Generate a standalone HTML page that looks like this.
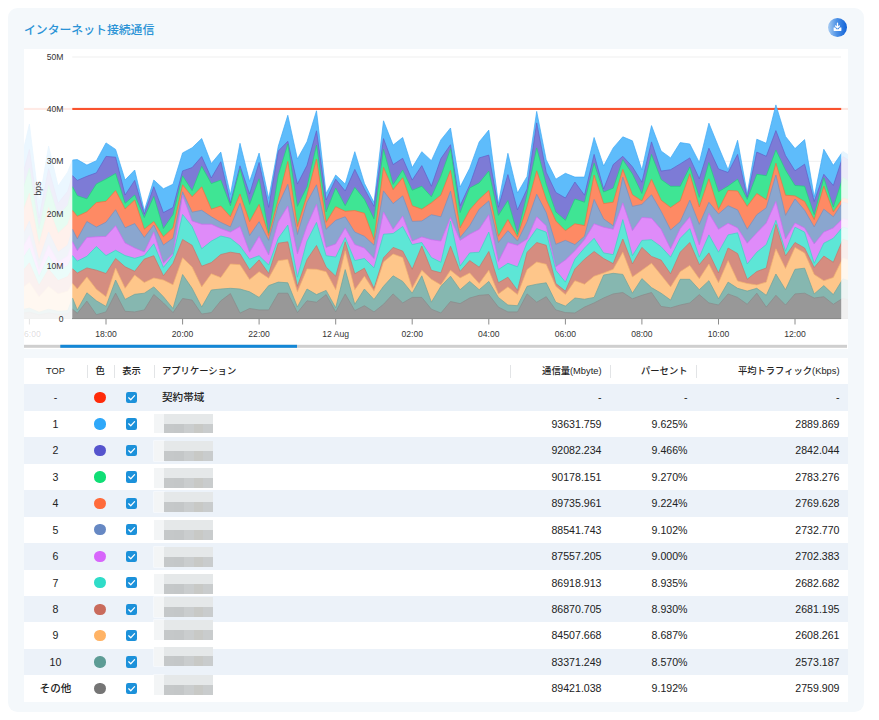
<!DOCTYPE html>
<html lang="ja"><head><meta charset="utf-8"><title>インターネット接続通信</title>
<style>
html,body{margin:0;padding:0;background:#fff}
body{width:879px;height:720px;position:relative;overflow:hidden;font-family:"Liberation Sans","Noto Sans CJK JP",sans-serif;color:#222}
.card{position:absolute;left:8px;top:8px;width:856px;height:704px;background:#f4f8fb;border-radius:9.5px}
.title{position:absolute;left:24px;top:21px;font-size:11.85px;line-height:18px;font-weight:500;color:#2a93d6;letter-spacing:0}
.dl{position:absolute;left:828.2px;top:18.2px;width:19px;height:19px;border-radius:50%;background:linear-gradient(90deg,#a9cdf3 0%,#4f93e6 45%,#0f62d8 100%);box-shadow:0 0 2px rgba(255,255,255,.9)}
.dl svg{position:absolute;left:4px;top:4px}
svg.chart{position:absolute;left:0;top:0}
svg.chart text{font-family:"Liberation Sans",sans-serif;font-size:8.6px;fill:#333}
.tbl{position:absolute;left:24px;top:358px;width:824px;background:#fff;font-size:10.6px;font-weight:500}
.tr,.th{position:relative;height:26.45px;line-height:26.45px;white-space:nowrap}
.tr.alt{background:#ecf2f9}
.tr span,.th span{position:absolute;top:0;height:100%}
.c1{left:0;width:63px;text-align:center}
.c2{left:63px;width:26.5px;text-align:center}
.c3{left:87.5px;width:40px;text-align:center}
.c4{left:138px}
.c5{left:400px;width:177.5px;text-align:right}
.c6{left:586px;width:77.5px;text-align:right}
.c7{left:672px;width:143.5px;text-align:right}
.th{font-size:9.3px;color:#222;font-weight:500}
.th .sep{top:6.5px;height:13px;width:1px;background:#e2e4e6}
.dot{position:absolute;left:7.4px;top:7.6px;width:11.2px;height:11.2px;border-radius:50%}
.cb{position:absolute;left:14.3px;top:7.6px;width:11.2px;height:11.2px;border-radius:2.2px;background:#1c91da}
.cb svg{position:absolute;left:0;top:0}
.nm{left:0}
.rd{position:absolute;left:-7.6px;top:0;width:58.7px;height:19.6px}
.tr .rd i{position:absolute;left:0;top:0;width:9.4px;height:19.6px;background:#f3f5f6;box-shadow:0 0 0 .6px rgba(255,255,255,.8)}
.tr .rd u{position:absolute;left:9.4px;top:0;width:49.3px;height:9.9px;background:#e5e8e9}
.tr .rd b{position:absolute;left:9.4px;top:9.9px;width:49.3px;height:9.7px;background:linear-gradient(90deg,#c5c8c9 0 20%,#c4c7c8 20% 40%,#cacdce 40% 61%,#c8c9c6 61% 80%,#c9cccd 80%)}
</style></head><body>
<div class="card"></div>
<div class="title">インターネット接続通信</div>
<div class="dl"><svg width="11" height="11" viewBox="0 0 11 11"><path d="M5.5 1.2v4.3M3.6 4 5.5 5.9 7.4 4" fill="none" stroke="#fff" stroke-width="1.3" stroke-linecap="round" stroke-linejoin="round"/><path d="M1.6 5.6v2.6q0 .9.9.9h6q.9 0 .9-.9V5.6H7.7L6.6 7.3H4.4L3.3 5.6z" fill="#fff"/></svg></div>
<svg class="chart" width="879" height="720" viewBox="0 0 879 720">
<defs><clipPath id="cp"><rect x="24" y="49" width="824" height="270"/></clipPath></defs>
<rect x="24" y="49" width="824" height="300" fill="#fff"/>
<line x1="72" x2="841" y1="57" y2="57" stroke="#efefef" stroke-width="1"/><line x1="72" x2="841" y1="161.3" y2="161.3" stroke="#efefef" stroke-width="1"/><line x1="72" x2="841" y1="213.8" y2="213.8" stroke="#efefef" stroke-width="1"/><line x1="72" x2="841" y1="266.3" y2="266.3" stroke="#efefef" stroke-width="1"/>
<g clip-path="url(#cp)">
<rect x="24" y="107.9" width="824" height="2.1" fill="#f9522d"/>
<polygon fill="#5ebcfb" stroke="#3fa9f5" stroke-width=".7" points="19.9,165 29.4,124 39,203 48.6,146 58.1,186 67.7,172 72.5,160 77.3,159.6 86.9,165.1 96.4,160.7 106,142.9 115.6,149.4 125.1,180 134.7,170 144.3,210.7 153.8,180 163.4,188.8 173,184.2 182.6,152.9 192.1,147.8 201.7,138.5 211.3,163.5 220.8,152.1 230.4,194.7 240,143.3 249.6,181.5 259.1,153.1 268.7,198.5 278.3,146.1 287.8,115.3 297.4,159 307,141.7 316.5,110.8 326.1,193.5 335.7,175 345.2,184 354.8,151.7 364.4,183.3 374,202.5 383.5,120.8 393.1,145.1 402.7,137.5 412.2,167.6 421.8,151.7 431.4,160.7 440.9,139.9 450.5,128 460.1,187 469.7,168.3 479.2,141.9 488.8,130.1 498.4,203.5 507.9,153.3 517.5,193 527.1,176.4 536.7,111.4 546.2,159.7 555.8,179.2 565.4,173.3 574.9,177.1 584.5,177.1 594.1,137.5 603.6,166 613.2,147.9 622.8,136.8 632.4,140.8 641.9,170 651.5,125.6 661.1,151 670.6,157.9 680.2,142.6 689.8,144 699.3,162.5 708.9,123.2 718.5,146.8 728.1,169.7 737.6,140.3 747.2,193.8 756.8,139.2 766.3,143.3 775.9,104.9 785.5,136.4 795,148.6 804.6,139.6 814.2,197 823.8,149.3 833.3,165.3 842.9,151.4 852.5,157.4 852.5,318.5 19.9,318.5"/>
<polygon fill="#7d7bd6" stroke="#6260c8" stroke-width=".7" points="19.9,185.1 29.4,149.5 39,218.1 48.6,168.6 58.1,203.3 67.7,191.2 72.5,175.6 77.3,180.4 86.9,176.3 96.4,172.8 106,156.4 115.6,157.2 125.1,195 134.7,180.4 144.3,214.1 153.8,186.7 163.4,212.6 173,207.5 182.6,170.9 192.1,167.6 201.7,156.5 211.3,178 220.8,161.7 230.4,203 240,165.8 249.6,194 259.1,162.5 268.7,207.4 278.3,151 287.8,141.3 297.4,184.1 307,165.3 316.5,130.8 326.1,200 335.7,179.2 345.2,191 354.8,169.4 364.4,189 374,206.4 383.5,138.6 393.1,164.6 402.7,158.3 412.2,180.1 421.8,165.6 431.4,186.3 440.9,158.6 450.5,144.7 460.1,205.8 469.7,185 479.2,157.9 488.8,155.1 498.4,207.3 507.9,174.6 517.5,209.9 527.1,188.9 536.7,122.9 546.2,172.2 555.8,192.4 565.4,198 574.9,182 584.5,195.2 594.1,154.4 603.6,189 613.2,164.6 622.8,156.3 632.4,166.7 641.9,182.2 651.5,141.9 661.1,171.1 670.6,169.7 680.2,163.9 689.8,157.9 699.3,178.8 708.9,148.2 718.5,169 728.1,172.5 737.6,154.4 747.2,197.3 756.8,152.1 766.3,156.3 775.9,130.6 785.5,155.6 795,170.8 804.6,164.2 814.2,201.5 823.8,174.3 833.3,185.5 842.9,156.6 852.5,162.6 852.5,318.5 19.9,318.5"/>
<polygon fill="#3fe594" stroke="#22cf7c" stroke-width=".7" points="19.9,199.9 29.4,168.2 39,229.2 48.6,185.2 58.1,216.1 67.7,205.3 72.5,186.7 77.3,195.7 86.9,198.9 96.4,183.9 106,179 115.6,173.5 125.1,203.3 134.7,195 144.3,217.6 153.8,196.4 163.4,228.5 173,214.5 182.6,175.8 192.1,190.6 201.7,166.3 211.3,183.6 220.8,180.1 230.4,205.8 240,169 249.6,204.4 259.1,178.8 268.7,233.5 278.3,175.3 287.8,144 297.4,206.4 307,186.8 316.5,145.1 326.1,212 335.7,188 345.2,205.7 354.8,187.4 364.4,199.3 374,218.9 383.5,149.3 393.1,184.5 402.7,170.1 412.2,190.3 421.8,186.2 431.4,196.8 440.9,176 450.5,148.9 460.1,212.6 469.7,188 479.2,182.9 488.8,171.1 498.4,215.4 507.9,200.5 517.5,234.2 527.1,193.9 536.7,147.9 546.2,184.1 555.8,211.9 565.4,220.3 574.9,199 584.5,202.2 594.1,163.2 603.6,192 613.2,188.2 622.8,159.7 632.4,173.9 641.9,193.6 651.5,154.4 661.1,179.4 670.6,186.3 680.2,186.3 689.8,166.9 699.3,197.4 708.9,162.5 718.5,191.8 728.1,186.1 737.6,179.2 747.2,199.4 756.8,174.3 766.3,175.7 775.9,150 785.5,170.1 795,185.5 804.6,186.2 814.2,214.7 823.8,177.8 833.3,207.1 842.9,177.4 852.5,183.4 852.5,318.5 19.9,318.5"/>
<polygon fill="#fe8a64" stroke="#f0703f" stroke-width=".7" points="19.9,219.8 29.4,193.4 39,244.2 48.6,207.6 58.1,233.3 67.7,224.3 72.5,210.4 77.3,216.3 86.9,211.8 96.4,202.6 106,201.3 115.6,190.6 125.1,209 134.7,200 144.3,229.2 153.8,221.5 163.4,236.8 173,227.8 182.6,184.8 192.1,196.8 201.7,186.8 211.3,209.2 220.8,206 230.4,216.8 240,194 249.6,221.7 259.1,204.4 268.7,235.6 278.3,199.2 287.8,161.4 297.4,226.5 307,195.3 316.5,159 326.1,222.4 335.7,206.7 345.2,211.3 354.8,210.6 364.4,213.3 374,239.7 383.5,167.4 393.1,189.7 402.7,177.8 412.2,205.8 421.8,209.2 431.4,202.8 440.9,195.1 450.5,170.4 460.1,227.9 469.7,210 479.2,199.2 488.8,190.5 498.4,236.3 507.9,219.6 517.5,236.9 527.1,206.4 536.7,170.8 546.2,199.6 555.8,221 565.4,230.7 574.9,223.8 584.5,225.6 594.1,175 603.6,203.6 613.2,202.2 622.8,169.4 632.4,194.8 641.9,200.9 651.5,179.4 661.1,200.2 670.6,207.5 680.2,200.9 689.8,173.9 699.3,207 708.9,178.8 718.5,209.6 728.1,190.5 737.6,191 747.2,206.4 756.8,193.5 766.3,199.7 775.9,163.2 785.5,195.2 795,195.9 804.6,201.5 814.2,219.6 823.8,186.2 833.3,211.9 842.9,198 852.5,201 852.5,318.5 19.9,318.5"/>
<polygon fill="#8aa6cf" stroke="#7391c1" stroke-width=".7" points="19.9,241.6 29.4,221.1 39,260.6 48.6,232.1 58.1,252.1 67.7,245.1 72.5,229.2 77.3,238.9 86.9,221.5 96.4,227.1 106,222.2 115.6,209.7 125.1,227.8 134.7,223.6 144.3,237.5 153.8,225 163.4,245.1 173,238.2 182.6,191.8 192.1,212.2 201.7,210.3 211.3,216.8 220.8,222.4 230.4,226.9 240,203.3 249.6,235.6 259.1,221.7 268.7,240.4 278.3,205 287.8,184.3 297.4,234.5 307,202.2 316.5,184.8 326.1,229.3 335.7,220.3 345.2,216.8 354.8,232.1 364.4,236.3 374,245.2 383.5,190.9 393.1,203.6 402.7,195.9 412.2,221.4 421.8,221 431.4,214.7 440.9,216.8 450.5,191.2 460.1,237.6 469.7,225.8 479.2,209.2 488.8,200.9 498.4,242.5 507.9,230.7 517.5,241.1 527.1,221.7 536.7,194.2 546.2,212.6 555.8,244.3 565.4,240.4 574.9,244.6 584.5,236.3 594.1,199.4 603.6,218.9 613.2,225.8 622.8,177.1 632.4,206.4 641.9,204.4 651.5,194.8 661.1,211.3 670.6,230 680.2,221.7 689.8,200.2 699.3,224.4 708.9,202.3 718.5,214 728.1,205.7 737.6,209.9 747.2,229.3 756.8,214.7 766.3,207.8 775.9,175 785.5,215.4 795,199 804.6,210.3 814.2,226.9 823.8,209.2 833.3,216.8 842.9,202 852.5,205 852.5,318.5 19.9,318.5"/>
<polygon fill="#df8bf9" stroke="#cf6cf0" stroke-width=".7" points="19.9,253 29.4,235.5 39,269.2 48.6,244.9 58.1,262 67.7,256 72.5,241.7 77.3,250.7 86.9,237.5 96.4,236.8 106,236.4 115.6,225.7 125.1,243 134.7,247.9 144.3,252 153.8,232 163.4,263.2 173,253.5 182.6,195.3 192.1,221 201.7,224.2 211.3,224.2 220.8,228.6 230.4,232.1 240,226.5 249.6,252.2 259.1,236.3 268.7,255 278.3,221.7 287.8,206.1 297.4,254 307,225.8 316.5,204.3 326.1,247.4 335.7,243.9 345.2,227.9 354.8,244.6 364.4,248 374,258.5 383.5,212 393.1,229.3 402.7,216.1 412.2,241.1 421.8,236.9 431.4,239.7 440.9,241.1 450.5,217.5 460.1,240.4 469.7,234.2 479.2,229.3 488.8,214.7 498.4,261.5 507.9,242.5 517.5,245.3 527.1,239 536.7,216.8 546.2,225.8 555.8,266.8 565.4,259.9 574.9,250.8 584.5,239.7 594.1,223.8 603.6,227.2 613.2,229.3 622.8,202.9 632.4,230.7 641.9,217.5 651.5,218.2 661.1,229.3 670.6,248.8 680.2,228.6 689.8,216.8 699.3,245 708.9,213.3 718.5,229.3 728.1,223.3 737.6,227.9 747.2,243.2 756.8,232.8 766.3,223 775.9,201.5 785.5,239 795,223 804.6,227.9 814.2,243.9 823.8,232.1 833.3,227.9 842.9,218.4 852.5,221.4 852.5,318.5 19.9,318.5"/>
<polygon fill="#5de6d6" stroke="#3fd3c2" stroke-width=".7" points="19.9,263.1 29.4,248.2 39,276.8 48.6,256.2 58.1,270.6 67.7,265.6 72.5,255.6 77.3,261.1 86.9,256.3 96.4,246.5 106,255.6 115.6,250.3 125.1,255.6 134.7,258.3 144.3,255.6 153.8,243.8 163.4,267.4 173,255.6 182.6,214.5 192.1,226.5 201.7,248.8 211.3,241.1 220.8,236 230.4,238.3 240,246 249.6,259.2 259.1,255.7 268.7,265 278.3,238.3 287.8,225.1 297.4,277.2 307,241.1 316.5,222.4 326.1,255.7 335.7,257.1 345.2,237.6 354.8,260.6 364.4,258.5 374,267.8 383.5,234.2 393.1,233.5 402.7,226.5 412.2,244.6 421.8,242.5 431.4,257.5 440.9,262.3 450.5,221 460.1,266.1 469.7,252.9 479.2,252.2 488.8,232.1 498.4,269.6 507.9,263.3 517.5,266.8 527.1,242.5 536.7,228.6 546.2,232.1 555.8,270.3 565.4,282.1 574.9,259.2 584.5,248 594.1,238.3 603.6,252.9 613.2,254.6 622.8,219.6 632.4,255.7 641.9,240.4 651.5,239.7 661.1,246.7 670.6,257.1 680.2,238.3 689.8,228.6 699.3,257.1 708.9,234.9 718.5,252.2 728.1,234.9 737.6,232.8 747.2,264 756.8,252.2 766.3,244.6 775.9,220.3 785.5,251.2 795,227.2 804.6,232.1 814.2,263.3 823.8,243.2 833.3,238.3 842.9,227 852.5,230 852.5,318.5 19.9,318.5"/>
<polygon fill="#d58d80" stroke="#c5766a" stroke-width=".7" points="19.9,274.5 29.4,262.8 39,285.4 48.6,269.1 58.1,280.6 67.7,276.6 72.5,268.8 77.3,273 86.9,267.9 96.4,270.2 106,273.5 115.6,258.4 125.1,266.8 134.7,271.3 144.3,259.1 153.8,255.7 163.4,275.8 173,263.3 182.6,239.5 192.1,245.3 201.7,266.2 211.3,262.6 220.8,254.5 230.4,252.2 240,253.8 249.6,269.8 259.1,259.9 268.7,273.5 278.3,243.2 287.8,241.8 297.4,286.3 307,259.6 316.5,245.5 326.1,267 335.7,276.2 345.2,241.8 354.8,273.8 364.4,268.2 374,288.3 383.5,257.8 393.1,247.4 402.7,251.1 412.2,269.3 421.8,246 431.4,270.3 440.9,272.8 450.5,246.2 460.1,271.4 469.7,260.6 479.2,267.2 488.8,251.5 498.4,282.8 507.9,277.2 517.5,290.4 527.1,252.2 536.7,242.5 546.2,245.3 555.8,283.5 565.4,291.1 574.9,268.9 584.5,259.2 594.1,251.5 603.6,258.5 613.2,263.6 622.8,239 632.4,264 641.9,247.4 651.5,256.4 661.1,260.1 670.6,273.8 680.2,252.2 689.8,242.5 699.3,264.7 708.9,252.9 718.5,273 728.1,248 737.6,253.6 747.2,279.3 756.8,271.5 766.3,268 775.9,224.4 785.5,256 795,242.5 804.6,248 814.2,267.5 823.8,256.1 833.3,262.3 842.9,239.3 852.5,242.3 852.5,318.5 19.9,318.5"/>
<polygon fill="#fec68a" stroke="#f0b070" stroke-width=".7" points="19.9,290 29.4,282.4 39,297.1 48.6,286.5 58.1,293.9 67.7,291.3 72.5,283.4 77.3,289 86.9,276.9 96.4,289.3 106,296.7 115.6,268.1 125.1,288.3 134.7,275.1 144.3,282.5 153.8,278 163.4,280 173,284.8 182.6,257.8 192.1,267 201.7,286.9 211.3,273.8 220.8,277.6 230.4,264 240,264.7 249.6,279.5 259.1,271.7 268.7,278.2 278.3,260.7 287.8,259.4 297.4,291.8 307,268.9 316.5,269.3 326.1,271.7 335.7,289.7 345.2,250.8 354.8,289.7 364.4,276.2 374,291.1 383.5,262 393.1,254 402.7,257.5 412.2,288.3 421.8,270.3 431.4,279.3 440.9,284.9 450.5,270.3 460.1,277.9 469.7,273 479.2,283.5 488.8,270.3 498.4,293.9 507.9,286.9 517.5,294.6 527.1,269.6 536.7,262 546.2,264.3 555.8,286.3 565.4,294.6 574.9,280.7 584.5,284.2 594.1,276.2 603.6,273 613.2,269.3 622.8,252.2 632.4,276.9 641.9,270.3 651.5,263.3 661.1,275.1 670.6,286.9 680.2,271.7 689.8,265.4 699.3,278.8 708.9,264 718.5,282.8 728.1,260.6 737.6,281 747.2,283.5 756.8,284.9 766.3,282.1 775.9,248.8 785.5,268.5 795,247.4 804.6,252.9 814.2,274.4 823.8,280.7 833.3,277.5 842.9,258.1 852.5,261.1 852.5,318.5 19.9,318.5"/>
<polygon fill="#86b7b0" stroke="#6fa39c" stroke-width=".7" points="19.9,310.2 29.4,308 39,312.2 48.6,309.2 58.1,311.3 67.7,310.6 72.5,298 77.3,309.9 86.9,292.8 96.4,300.8 106,306.4 115.6,280 125.1,299.4 134.7,294.3 144.3,293.2 153.8,286.9 163.4,296.7 173,308.5 182.6,274.5 192.1,288.3 201.7,307.1 211.3,290 220.8,289 230.4,288.3 240,289 249.6,291.8 259.1,297.4 268.7,285.6 278.3,282.1 287.8,282.8 297.4,307 307,289 316.5,294.6 326.1,290.4 335.7,307.8 345.2,269.6 354.8,304.3 364.4,289 374,299.4 383.5,286.3 393.1,275.8 402.7,281.4 412.2,293.2 421.8,275.8 431.4,302.2 440.9,286.3 450.5,276.2 460.1,289.7 469.7,281.4 479.2,289.7 488.8,281.4 498.4,297.4 507.9,305 517.5,305.7 527.1,286.3 536.7,284.2 546.2,282.8 555.8,302.2 565.4,306.1 574.9,298 584.5,299.2 594.1,297.4 603.6,275.1 613.2,273.3 622.8,274.4 632.4,293.2 641.9,278.6 651.5,287.6 661.1,293.2 670.6,300.1 680.2,279.3 689.8,279.3 699.3,289.7 708.9,280.7 718.5,298.8 728.1,282.1 737.6,288.3 747.2,291.1 756.8,288.3 766.3,295.3 775.9,274 785.5,289.7 795,269.3 804.6,268.2 814.2,293.9 823.8,285.6 833.3,294.6 842.9,278.9 852.5,281.9 852.5,318.5 19.9,318.5"/>
<polygon fill="#989898" stroke="#8a8a8a" stroke-width=".7" points="19.9,313.5 29.4,312.1 39,314.7 48.6,312.9 58.1,314.2 67.7,313.7 72.5,309.2 77.3,313.3 86.9,301.1 96.4,314.7 106,311.9 115.6,293.1 125.1,311.3 134.7,311.9 144.3,309.9 153.8,294.5 163.4,302.9 173,312.6 182.6,298.5 192.1,300.1 201.7,314 211.3,312.6 220.8,300.8 230.4,293.6 240,313.1 249.6,308.5 259.1,309.9 268.7,309.9 278.3,293.2 287.8,293.2 297.4,312.6 307,300.8 316.5,302.2 326.1,294.6 335.7,311.9 345.2,293.9 354.8,310.6 364.4,305.7 374,311.9 383.5,304.3 393.1,293.9 402.7,302.9 412.2,297.4 421.8,297.4 431.4,309.2 440.9,313 450.5,301.5 460.1,303.6 469.7,298 479.2,295.3 488.8,294.6 498.4,307.1 507.9,311.9 517.5,311.9 527.1,293.9 536.7,302.2 546.2,296.7 555.8,309.9 565.4,312.6 574.9,313 584.5,307.1 594.1,302.9 603.6,298 613.2,293.9 622.8,292.5 632.4,298.8 641.9,295.3 651.5,292.5 661.1,306.4 670.6,307.8 680.2,305 689.8,302.9 699.3,294.6 708.9,302.9 718.5,305 728.1,293.9 737.6,297.4 747.2,304.3 756.8,293.2 766.3,307.1 775.9,295.3 785.5,305 795,293.9 804.6,293.2 814.2,298 823.8,296.7 833.3,304.3 842.9,298.2 852.5,301.2 852.5,318.5 19.9,318.5"/>
</g>
<rect x="24" y="49" width="48.3" height="272" fill="#fff" fill-opacity=".88"/>
<rect x="841.2" y="49" width="6.8" height="272" fill="#fff" fill-opacity=".85"/>
<line x1="72" x2="841" y1="318.6" y2="318.6" stroke="#8c8c8c" stroke-width="1"/>
<line x1="106" x2="106" y1="318.5" y2="324.5" stroke="#8c8c8c" stroke-width="1"/><text x="106" y="336.8" text-anchor="middle">18:00</text><line x1="182.6" x2="182.6" y1="318.5" y2="324.5" stroke="#8c8c8c" stroke-width="1"/><text x="182.6" y="336.8" text-anchor="middle">20:00</text><line x1="259.1" x2="259.1" y1="318.5" y2="324.5" stroke="#8c8c8c" stroke-width="1"/><text x="259.1" y="336.8" text-anchor="middle">22:00</text><line x1="335.7" x2="335.7" y1="318.5" y2="324.5" stroke="#8c8c8c" stroke-width="1"/><text x="335.7" y="336.8" text-anchor="middle">12 Aug</text><line x1="412.2" x2="412.2" y1="318.5" y2="324.5" stroke="#8c8c8c" stroke-width="1"/><text x="412.2" y="336.8" text-anchor="middle">02:00</text><line x1="488.8" x2="488.8" y1="318.5" y2="324.5" stroke="#8c8c8c" stroke-width="1"/><text x="488.8" y="336.8" text-anchor="middle">04:00</text><line x1="565.4" x2="565.4" y1="318.5" y2="324.5" stroke="#8c8c8c" stroke-width="1"/><text x="565.4" y="336.8" text-anchor="middle">06:00</text><line x1="641.9" x2="641.9" y1="318.5" y2="324.5" stroke="#8c8c8c" stroke-width="1"/><text x="641.9" y="336.8" text-anchor="middle">08:00</text><line x1="718.5" x2="718.5" y1="318.5" y2="324.5" stroke="#8c8c8c" stroke-width="1"/><text x="718.5" y="336.8" text-anchor="middle">10:00</text><line x1="795" x2="795" y1="318.5" y2="324.5" stroke="#8c8c8c" stroke-width="1"/><text x="795" y="336.8" text-anchor="middle">12:00</text>
<line x1="29.4" x2="29.4" y1="319" y2="324.5" stroke="#e4e4e4" stroke-width="1"/>
<text x="24" y="336.8" fill-opacity=".18">6:00</text>
<text x="63.5" y="60.1" text-anchor="end">50M</text><text x="63.5" y="112.1" text-anchor="end">40M</text><text x="63.5" y="164.4" text-anchor="end">30M</text><text x="63.5" y="216.9" text-anchor="end">20M</text><text x="63.5" y="269.4" text-anchor="end">10M</text><text x="63.5" y="321.8" text-anchor="end">0</text>
<text transform="translate(40.5,188.5) rotate(-90)" text-anchor="middle" style="font-size:8.6px">bps</text>
<rect x="24" y="344.8" width="823" height="3" fill="#cfcfcf"/>
<rect x="60.3" y="344.8" width="236.7" height="3" fill="#1487d6"/>
</svg>
<div class="tbl">
<div class="th"><span class="c1">TOP</span><span class="c2">色</span><span class="c3">表示</span><span class="c4">アプリケーション</span><span class="c5">通信量(Mbyte)</span><span class="c6">パーセント</span><span class="c7">平均トラフィック(Kbps)</span>
<span class="sep" style="left:62.5px"></span><span class="sep" style="left:89.5px"></span><span class="sep" style="left:129.5px"></span><span class="sep" style="left:486px"></span><span class="sep" style="left:586px"></span><span class="sep" style="left:671.5px"></span></div>
<div class="tr alt"><span class="c1">-</span><span class="c2"><i class="dot" style="background:#ff2b0a"></i></span><span class="c3"><i class="cb"><svg viewBox="0 0 12 12" width="11.2" height="11.2"><path d="M2.9 6.2 5.1 8.3 9.2 3.9" fill="none" stroke="#fff" stroke-width="1.3" stroke-linecap="round" stroke-linejoin="round"/></svg></i></span><span class="c4"><span class="nm">契約帯域</span></span><span class="c5">-</span><span class="c6">-</span><span class="c7">-</span></div>
<div class="tr"><span class="c1">1</span><span class="c2"><i class="dot" style="background:#2fa8f9"></i></span><span class="c3"><i class="cb"><svg viewBox="0 0 12 12" width="11.2" height="11.2"><path d="M2.9 6.2 5.1 8.3 9.2 3.9" fill="none" stroke="#fff" stroke-width="1.3" stroke-linecap="round" stroke-linejoin="round"/></svg></i></span><span class="c4"><span class="rd" style="top:2.85px"><i></i><u></u><b></b></span></span><span class="c5">93631.759</span><span class="c6">9.625%</span><span class="c7">2889.869</span></div>
<div class="tr alt"><span class="c1">2</span><span class="c2"><i class="dot" style="background:#5554cd"></i></span><span class="c3"><i class="cb"><svg viewBox="0 0 12 12" width="11.2" height="11.2"><path d="M2.9 6.2 5.1 8.3 9.2 3.9" fill="none" stroke="#fff" stroke-width="1.3" stroke-linecap="round" stroke-linejoin="round"/></svg></i></span><span class="c4"><span class="rd" style="top:4.15px"><i></i><u></u><b></b></span></span><span class="c5">92082.234</span><span class="c6">9.466%</span><span class="c7">2842.044</span></div>
<div class="tr"><span class="c1">3</span><span class="c2"><i class="dot" style="background:#0fde75"></i></span><span class="c3"><i class="cb"><svg viewBox="0 0 12 12" width="11.2" height="11.2"><path d="M2.9 6.2 5.1 8.3 9.2 3.9" fill="none" stroke="#fff" stroke-width="1.3" stroke-linecap="round" stroke-linejoin="round"/></svg></i></span><span class="c4"><span class="rd" style="top:4.7px"><i></i><u></u><b></b></span></span><span class="c5">90178.151</span><span class="c6">9.270%</span><span class="c7">2783.276</span></div>
<div class="tr alt"><span class="c1">4</span><span class="c2"><i class="dot" style="background:#ff6b3b"></i></span><span class="c3"><i class="cb"><svg viewBox="0 0 12 12" width="11.2" height="11.2"><path d="M2.9 6.2 5.1 8.3 9.2 3.9" fill="none" stroke="#fff" stroke-width="1.3" stroke-linecap="round" stroke-linejoin="round"/></svg></i></span><span class="c4"><span class="rd" style="top:2.25px"><i></i><u></u><b></b></span></span><span class="c5">89735.961</span><span class="c6">9.224%</span><span class="c7">2769.628</span></div>
<div class="tr"><span class="c1">5</span><span class="c2"><i class="dot" style="background:#6688c3"></i></span><span class="c3"><i class="cb"><svg viewBox="0 0 12 12" width="11.2" height="11.2"><path d="M2.9 6.2 5.1 8.3 9.2 3.9" fill="none" stroke="#fff" stroke-width="1.3" stroke-linecap="round" stroke-linejoin="round"/></svg></i></span><span class="c4"><span class="rd" style="top:3.5px"><i></i><u></u><b></b></span></span><span class="c5">88541.743</span><span class="c6">9.102%</span><span class="c7">2732.770</span></div>
<div class="tr alt"><span class="c1">6</span><span class="c2"><i class="dot" style="background:#d766fb"></i></span><span class="c3"><i class="cb"><svg viewBox="0 0 12 12" width="11.2" height="11.2"><path d="M2.9 6.2 5.1 8.3 9.2 3.9" fill="none" stroke="#fff" stroke-width="1.3" stroke-linecap="round" stroke-linejoin="round"/></svg></i></span><span class="c4"><span class="rd" style="top:3.95px"><i></i><u></u><b></b></span></span><span class="c5">87557.205</span><span class="c6">9.000%</span><span class="c7">2702.383</span></div>
<div class="tr"><span class="c1">7</span><span class="c2"><i class="dot" style="background:#2fdcc8"></i></span><span class="c3"><i class="cb"><svg viewBox="0 0 12 12" width="11.2" height="11.2"><path d="M2.9 6.2 5.1 8.3 9.2 3.9" fill="none" stroke="#fff" stroke-width="1.3" stroke-linecap="round" stroke-linejoin="round"/></svg></i></span><span class="c4"><span class="rd" style="top:4.6px"><i></i><u></u><b></b></span></span><span class="c5">86918.913</span><span class="c6">8.935%</span><span class="c7">2682.682</span></div>
<div class="tr alt"><span class="c1">8</span><span class="c2"><i class="dot" style="background:#c96b5c"></i></span><span class="c3"><i class="cb"><svg viewBox="0 0 12 12" width="11.2" height="11.2"><path d="M2.9 6.2 5.1 8.3 9.2 3.9" fill="none" stroke="#fff" stroke-width="1.3" stroke-linecap="round" stroke-linejoin="round"/></svg></i></span><span class="c4"><span class="rd" style="top:1.25px"><i></i><u></u><b></b></span></span><span class="c5">86870.705</span><span class="c6">8.930%</span><span class="c7">2681.195</span></div>
<div class="tr"><span class="c1">9</span><span class="c2"><i class="dot" style="background:#ffb365"></i></span><span class="c3"><i class="cb"><svg viewBox="0 0 12 12" width="11.2" height="11.2"><path d="M2.9 6.2 5.1 8.3 9.2 3.9" fill="none" stroke="#fff" stroke-width="1.3" stroke-linecap="round" stroke-linejoin="round"/></svg></i></span><span class="c4"><span class="rd" style="top:-1.9px"><i></i><u></u><b></b></span></span><span class="c5">84507.668</span><span class="c6">8.687%</span><span class="c7">2608.261</span></div>
<div class="tr alt"><span class="c1">10</span><span class="c2"><i class="dot" style="background:#5d9c95"></i></span><span class="c3"><i class="cb"><svg viewBox="0 0 12 12" width="11.2" height="11.2"><path d="M2.9 6.2 5.1 8.3 9.2 3.9" fill="none" stroke="#fff" stroke-width="1.3" stroke-linecap="round" stroke-linejoin="round"/></svg></i></span><span class="c4"><span class="rd" style="top:-2.25px"><i></i><u></u><b></b></span></span><span class="c5">83371.249</span><span class="c6">8.570%</span><span class="c7">2573.187</span></div>
<div class="tr"><span class="c1">その他</span><span class="c2"><i class="dot" style="background:#757575"></i></span><span class="c3"><i class="cb"><svg viewBox="0 0 12 12" width="11.2" height="11.2"><path d="M2.9 6.2 5.1 8.3 9.2 3.9" fill="none" stroke="#fff" stroke-width="1.3" stroke-linecap="round" stroke-linejoin="round"/></svg></i></span><span class="c4"><span class="rd" style="top:0px"><i></i><u></u><b></b></span></span><span class="c5">89421.038</span><span class="c6">9.192%</span><span class="c7">2759.909</span></div>
</div>
</body></html>
